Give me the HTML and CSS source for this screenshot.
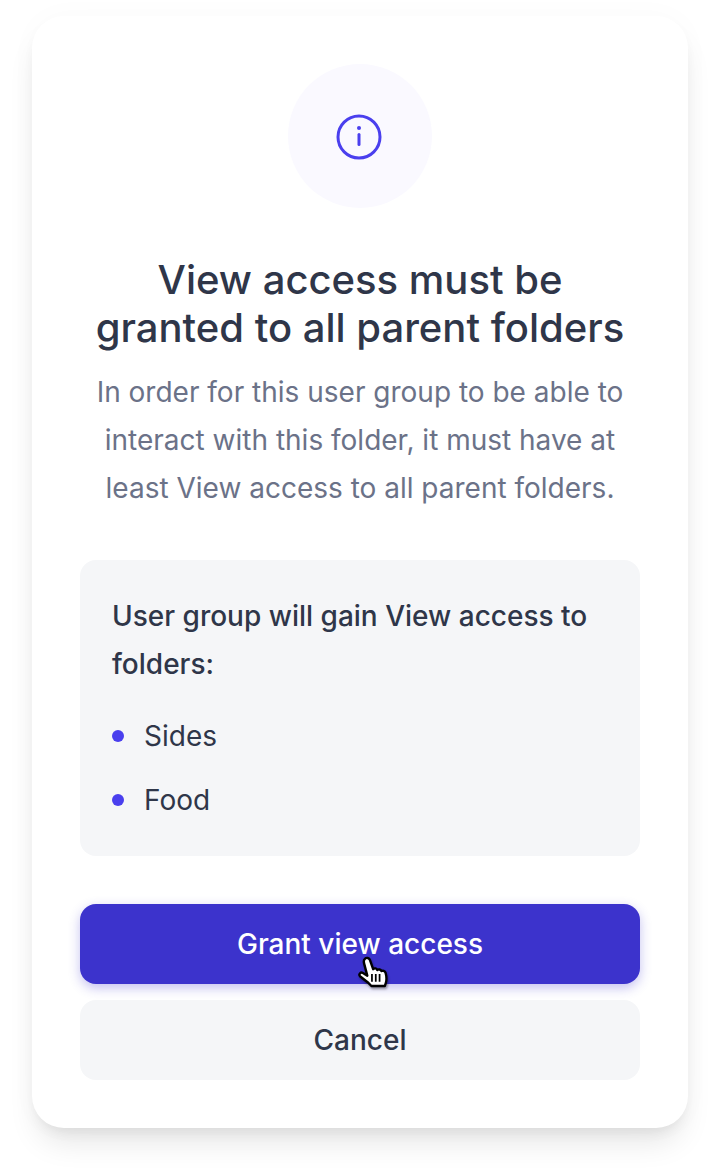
FILE: index.html
```html
<!DOCTYPE html>
<html lang="en">
<head>
    <meta charset="UTF-8">
    <meta name="viewport" content="width=device-width, initial-scale=1.0">
    <title>Grant view access</title>
    <link rel="stylesheet" href="styles.css">
</head>
<body>

<div class="modal">
    <div class="icon-circle">
        <svg class="info-icon" viewBox="0 0 46 46" width="46" height="46" fill="none" stroke="#4a3fee" stroke-width="3" stroke-linecap="round">
            <circle cx="23" cy="23" r="21"/>
            <path d="M23 20.500V30.500"/>
            <circle cx="23" cy="14" r="2" fill="#4a3fee" stroke="none"/>
        </svg>
    </div>

    <h1 class="title">View access must be<br>granted to all parent folders</h1>
    <p class="desc">In order for this user group to be able to<br>interact with this folder, it must have at<br>least View access to all parent folders.</p>

    <div class="folders">
        <p class="folders-head">User group will gain View access to folders:</p>
        <ul class="folder-list">
            <li>Sides</li>
            <li>Food</li>
        </ul>
    </div>

    <div class="actions">
        <button class="btn btn-primary">Grant view access
            <svg class="cursor" viewBox="0 0 30 34" width="33" height="37">
                <path d="M8 3.500c1.500-1.500 4-.8 4.600 1l3 8.500c1.200-1.200 3.200-.8 3.800.8 1.200-1 3.200-.6 3.800 1 1.200-.8 3.200-.2 3.800 1.500 1 3.500 1.200 6.500.2 9.500l-.9 2.700H14l-3.500-3.500-7-5.500c-1.500-1.700.5-4.200 2.700-3l4 2.500L7.200 7.500C6.800 5.800 7 4.500 8 3.500z" fill="#fff" stroke="#000" stroke-width="2.200" stroke-linejoin="round"/>
                <path d="M14.500 17.500v7M18 17.500v7M21.500 17.500v7" stroke="#000" stroke-width="1.600" fill="none"/>
            </svg>
        </button>
        <button class="btn btn-secondary">Cancel</button>
    </div>
</div>

</body>
</html>
```

FILE: styles.css
```css
html, body {
    height: 100%;
}
body {
    margin: 0;
    padding: 16px 32px;
    box-sizing: border-box;
    background: #fff;
    font-family: Inter, "Noto Sans", sans-serif;
    overflow: hidden;
}
.modal {
    height: 1112px;
    box-sizing: border-box;
    padding: 48px;
    background: #fff;
    border-radius: 32px;
    box-shadow: 0 20px 30px -6px rgba(0, 0, 0, 0.1), 0 8px 12px -4px rgba(0, 0, 0, 0.05), 0 0 30px rgba(0, 0, 0, 0.025);
}
.icon-circle {
    width: 144px;
    height: 144px;
    margin: 0 auto;
    border-radius: 50%;
    background: #faf9ff;
    display: flex;
    align-items: center;
    justify-content: center;
}
.info-icon {
    margin-left: -3px;
    margin-top: 2px;
}
.title {
    margin: 48px 0 0;
    font-size: 40px;
    line-height: 48px;
    font-weight: 500;
    text-align: center;
    color: #2f3649;
}
.desc {
    margin: 16px 0 0;
    font-size: 28px;
    line-height: 48px;
    text-align: center;
    color: #6b7288;
}
.folders {
    margin-top: 48px;
    padding: 32px;
    height: 296px;
    box-sizing: border-box;
    background: #f5f6f8;
    border-radius: 16px;
}
.folders-head {
    margin: 0;
    font-size: 28px;
    line-height: 48px;
    font-weight: 500;
    color: #2f3649;
}
.folder-list {
    list-style: none;
    margin: 24px 0 0;
    padding: 0;
}
.folder-list li {
    display: flex;
    align-items: center;
    gap: 20px;
    height: 48px;
    margin-bottom: 16px;
    font-size: 28px;
    color: #2f3649;
}
.folder-list li::before {
    content: "";
    width: 12px;
    height: 12px;
    border-radius: 50%;
    background: #4a3fee;
}
.actions {
    margin-top: 48px;
    display: flex;
    flex-direction: column;
    gap: 16px;
}
.btn {
    position: relative;
    height: 80px;
    border: 0;
    border-radius: 16px;
    font-family: inherit;
    font-size: 28px;
    font-weight: 500;
}
.btn-primary {
    background: #3c33cc;
    color: #fff;
    box-shadow: 0 4px 12px rgba(60, 51, 204, 0.3);
}
.btn-secondary {
    background: #f5f6f8;
    color: #2f3649;
}
.cursor {
    position: absolute;
    left: 276px;
    top: 51px;
    filter: drop-shadow(1px 2px 1px rgba(0, 0, 0, 0.35));
}
```
